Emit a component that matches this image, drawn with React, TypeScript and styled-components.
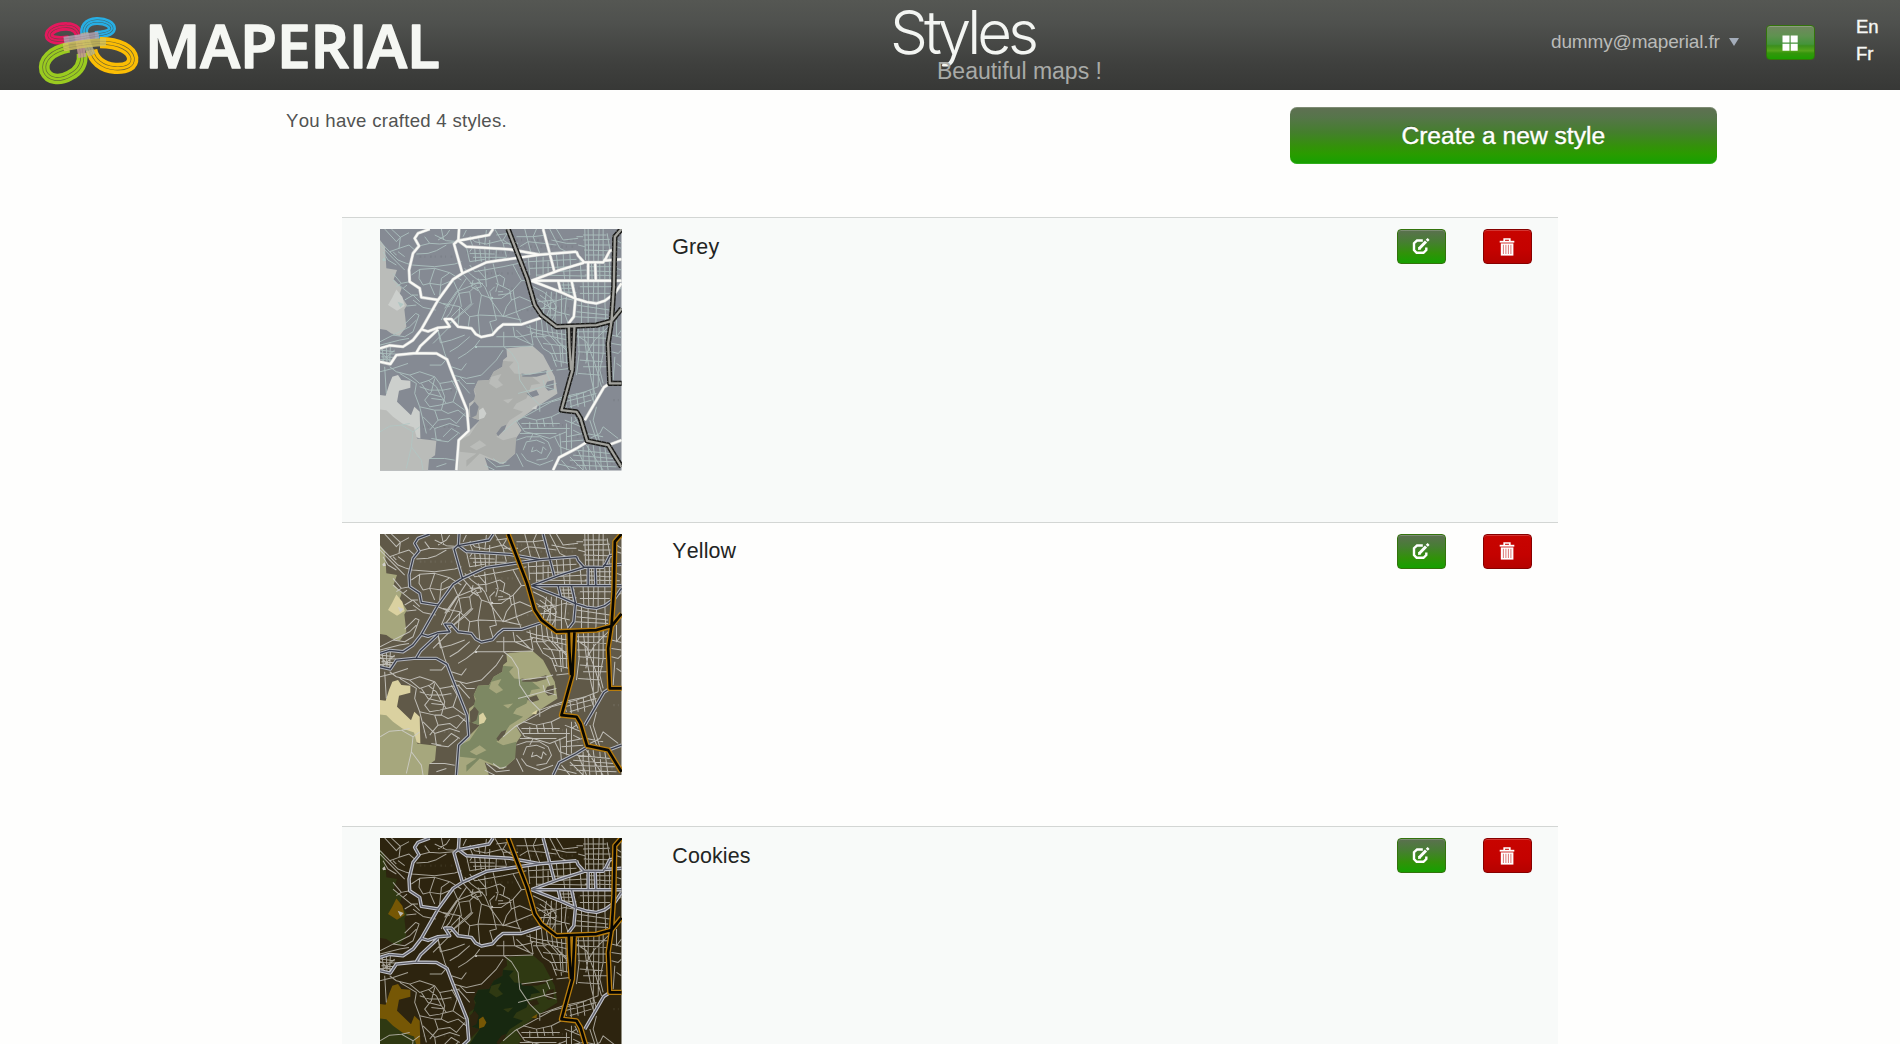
import React from "react";
import styled, { createGlobalStyle } from "styled-components";

const GlobalStyle = createGlobalStyle`
  html, body {
    margin: 0;
    padding: 0;
    background: #fefefd;
  }
  body {
    height: 1044px;
    overflow: hidden;
    font-family: "Liberation Sans", Arial, sans-serif;
    font-kerning: none;
    color: #222423;
  }
  * { box-sizing: border-box; }
`;

const Page = styled.div`
  width: 1900px;
  height: 1044px;
  overflow: hidden;
`;

const Header = styled.header`
  display: flex;
  align-items: flex-start;
  height: 90px;
  background: linear-gradient(#555753 0%, #4f514e 25%, #3f403e 70%, #373836 100%);
`;

const LogoLink = styled.div`
  width: 890px;
  height: 90px;
`;

const Heading = styled.div`
  width: 661px;
`;

const Title = styled.h1`
  margin: -5px 0 0;
  font-family: Inter, "Liberation Sans", sans-serif;
  font-weight: 300;
  font-size: 60px;
  line-height: 74px;
  letter-spacing: -4px;
  color: #f3f5f2;
`;

const Subtitle = styled.p`
  margin: -11px 0 0 47px;
  font-size: 23px;
  line-height: 26px;
  letter-spacing: 0;
  color: #a9aba8;
`;

const Account = styled.div`
  display: flex;
  align-items: center;
  gap: 9px;
  width: 215px;
  padding-top: 30px;
  font-size: 19px;
  line-height: 24px;
  letter-spacing: -0.15px;
  color: #babbb9;
`;

const Caret = styled.span`
  border: 5.5px solid transparent;
  border-top: 8px solid #a4adba;
  border-bottom: 0;
`;

const Button = styled.button<{ $tone: "green" | "red" | "menu" }>`
  display: flex;
  align-items: center;
  justify-content: center;
  width: 48.5px;
  height: 35px;
  padding: 0;
  border-radius: 4px;
  border: 1px solid ${(p) => (p.$tone === "red" ? "#870000" : "#33730c")};
  box-shadow: inset 0 1px 0 rgba(255, 255, 255, 0.2);
  background: ${(p) =>
    p.$tone === "red"
      ? "linear-gradient(#c80400, #c40200 60%, #b50200)"
      : p.$tone === "menu"
        ? "linear-gradient(#71865f 0%, #5f9250 30%, #44943a 55%, #3c8f1c 60%, #55a51c 75%, #35960c 82%, #1c9d00 100%)"
        : "linear-gradient(#5b7050 0%, #477e33 35%, #319209 70%, #16a000 100%)"};
`;

const MenuSlot = styled.div`
  width: 90px;
  padding-top: 25px;
`;

const Languages = styled.div`
  padding-top: 14px;
  font-size: 18.5px;
  line-height: 26.5px;
  color: #f6f7f5;
  -webkit-text-stroke: 0.4px #f6f7f5;
`;

const Toolbar = styled.section`
  display: flex;
  justify-content: space-between;
  align-items: flex-start;
  height: 127px;
  padding: 17px 183.5px 0 286px;
`;

const Summary = styled.p`
  margin: 2px 0 0;
  font-size: 18.6px;
  line-height: 24px;
  letter-spacing: 0.27px;
  color: #525352;
`;

const CreateButton = styled.button`
  width: 426.5px;
  height: 57px;
  padding: 0;
  border: 0;
  border-radius: 7px;
  font: 24.6px/57px "Liberation Sans", Arial, sans-serif;
  color: #fff;
  text-shadow: 0 -1px 0 rgba(0, 0, 0, 0.3);
  -webkit-text-stroke: 0.4px #fff;
  box-shadow: inset 0 1px 0 rgba(255, 255, 255, 0.2), inset 0 -1px 0 rgba(90, 190, 70, 0.4);
  background: linear-gradient(#5f7053 0%, #56754a 18%, #447f2c 45%, #339209 70%, #2a9b00 82%, #15a000 100%);
`;

const List = styled.main`
  width: 1216px;
  margin-left: 342px;
`;

const Row = styled.article<{ $shaded: boolean }>`
  display: flex;
  align-items: flex-start;
  height: 304.6px;
  padding: 11px 26.5px 0 38.3px;
  border-top: 1px solid #d3d6d4;
  background: ${(p) => (p.$shaded ? "#f8faf9" : "#fefefd")};
`;

const Name = styled.h2`
  flex: 1;
  margin: 5.6px 0 0 50.5px;
  font-weight: 400;
  font-size: 21.4px;
  line-height: 25px;
  letter-spacing: 0.15px;
  color: #222423;
`;

const Actions = styled.div`
  display: flex;
  gap: 37.4px;
`;

const MapSvg = styled.svg`
  display: block;
  width: 241.5px;
  height: 241.5px;
  flex: none;
`;

type Theme = {
  ground: string;
  texture: string;
  park: string;
  wood: string;
  field: string;
  parkLeft: string;
  street: string;
  roadCase: string;
  roadCore: string;
  wayCase: string;
  wayCore: string;
  roadW: number;
  coreW: number;
  wayW: number;
  streetW: number;
  dashed?: boolean;
};

const grey: Theme = {
  ground: "#858a93", texture: "#7d828a", park: "#babcb9", wood: "#acaeab", field: "#cccfcc", parkLeft: "#babcb9",
  street: "#b1c7c4", roadCase: "#c9cccc", roadCore: "#fafaf6", wayCase: "#171716", wayCore: "#a3a39e",
  roadW: 9.5, coreW: 6, wayW: 7, streetW: 2.9, dashed: true,
};
const yellow: Theme = {
  ground: "#605948", texture: "#6c6657", park: "#a6a77d", wood: "#7d8863", field: "#dad1a0", parkLeft: "#a6a77d",
  street: "#d0cfca", roadCase: "#b3b6bd", roadCore: "#373c4b", wayCase: "#b87d0d", wayCore: "#080702",
  roadW: 10, coreW: 4, wayW: 8, streetW: 3,
};
const cookies: Theme = {
  ground: "#2d240f", texture: "#3b331f", park: "#2f3912", wood: "#172810", field: "#765705", parkLeft: "#2f3912",
  street: "#bab7ae", roadCase: "#c3c4cb", roadCore: "#62646f", wayCase: "#b87d0d", wayCore: "#080702",
  roadW: 10.5, coreW: 4, wayW: 8, streetW: 3,
};

const roads = [
  "M180 27L145 40L135 55L148 78L130 100L118 150L120 185L150 205L155 232L207 240",
  "M268 27L266 60L253 72L278 160M266 62L358 45L370 27M266 62L290 80L420 88L510 104",
  "M620 95L510 104L350 127L278 160L250 178L205 240L155 328L130 360L100 380L60 376L31 385",
  "M620 95L625 107L642 126L700 127L708 115L720 92L735 90M700 122L755 118",
  "M31 425L62 432L80 405L140 399L200 400L232 418L250 465L292 570L297 632L267 660L260 750",
  "M140 398L152 378L205 328M155 328L175 334L205 323L240 320L225 297L245 297L265 320L305 325L318 342L335 351L368 344L385 325L400 313L455 313L515 293",
  "M520 27L537 90L553 152M485 182L570 150L642 128M485 182L755 182",
  "M485 182L570 215L615 235L650 246L680 250L705 242L735 220L755 190",
  "M565 182L573 215M605 182L617 235L612 290L595 312M655 130L655 180M676 130L678 180",
  "M720 490L702 502L680 540L645 600M652 665L620 685L568 712L550 750M715 675L755 660",
];

const ways = [
  "M415 27L472 175L495 255L515 285L560 320L680 315L725 303L755 266",
  "M755 27L735 50L732 200L725 303L715 370L720 490L755 490",
  "M597 320L599 380L604 450M614 320L608 450L590 515L575 570L620 575L632 595L652 662L715 675L735 708L755 740",
];

const streets = [
  // North-west
  "M31 65L60 95L85 120L110 130L128 135L195 140L255 132L275 125",
  "M31 75L70 115L105 150M45 27L80 65L92 52L118 38M65 27L92 52M92 52L88 85L60 95M88 85L118 75L135 90",
  "M148 78L180 70L210 72L250 68M180 70L165 50M195 45L230 62L255 64M205 60L230 45L240 30M215 27L222 60M175 100L140 102M175 100L200 92L230 75",
  "M125 165L150 148L195 145L240 158L275 180M150 148L148 175L160 195M195 145L180 190L195 225M240 158L215 175L210 225M160 195L180 190L215 195L250 180",
  "M70 160L95 190L120 185M70 180L100 205L125 225L145 225M95 190L80 200M100 205L112 195M105 240L130 225L150 245M130 240L160 262L198 270M110 258L140 255",
  "M85 95L105 110M70 95L80 105M40 95L55 120L80 135",
  "M31 365L70 345L105 350L130 335L148 285L138 280L105 312M70 345L120 320L140 300M31 375L90 360L118 355",
  // Middle-north grid
  "M290 80L300 125L345 118M315 85L318 125M330 85L335 125M345 85L348 125M360 60L358 120M380 85L378 125M300 100L375 102M310 112L410 112M300 55L310 80L300 95",
  "M280 50L290 30M300 48L315 65L350 72L400 60M325 45L330 75M350 30L345 75M375 27L400 70L410 110M400 60L430 80M380 45L420 40M400 70L445 70M420 27L400 60",
  "M278 160L310 195L330 185L345 200L360 235L400 290M290 175L280 190L230 265L215 300M285 145L305 165L325 180L350 178L390 165M310 195L260 215L225 265",
  "M300 135L315 155L400 140L470 125M325 150L350 178M345 140L350 200M370 130L385 190L378 215M390 165L405 175L400 200L420 210L425 240M378 190L400 200M365 235L395 235L430 210L455 182M430 135L455 182L472 180",
  "M250 180L268 220L240 280L225 298M268 220L300 215L320 195M268 220L275 260L245 290M300 215L305 250L240 310M320 200L335 225L325 285L330 345M335 225L365 235L380 300L360 305L372 345",
  "M220 250L270 260L300 290L330 285L400 288L455 300M205 245L240 260M240 310L290 270L310 250M270 260L265 320M300 290L295 324M425 240L450 230L485 245M425 240L410 260L400 290L440 275L490 255M430 210L440 275L455 312",
  "M365 235L360 215L375 200M385 215L400 215M385 225L425 220M310 180L305 200L325 212M325 175L335 200L315 205M300 190L340 190",
  // North-east grid
  "M450 80L475 65L520 70L560 75M440 50L490 50L530 45M465 27L475 65L485 105M500 27L490 50L510 100M540 27L570 85L590 95M560 27L580 60L625 55M545 60L590 70L620 70M560 105L565 150M580 98L582 140M600 97L602 135",
  "M645 27L647 120M655 27L657 125M670 27L672 125M688 27L685 125M700 27L700 120M640 45L710 45M640 60L720 58M645 75L722 75M642 90L715 92M645 105L705 105M620 50L640 50M625 75L645 80M712 40L720 90",
  "M475 125L620 118M480 145L600 140M475 110L480 165M500 110L500 170M520 110L520 165M535 125L535 158M550 155L650 150M500 165L650 168M580 140L585 180M600 140L600 180M630 110L635 180M650 140L725 140M650 152L725 155M645 165L750 167M665 130L667 180M690 130L690 180M705 130L705 180M718 105L720 180",
  "M580 185L585 225M595 185L598 225M610 190L610 230M575 195L615 195M570 205L615 205M575 215L620 218M640 185L642 240M655 185L657 245M672 185L670 248M685 185L685 248M705 185L705 240M630 200L725 200M630 220L720 220M680 250L678 315M655 250L655 310M705 242L708 305M620 255L720 270M620 275L715 285M615 290L715 295M635 245L635 315M740 60L755 70M740 80L755 85M740 145L755 150M740 210L755 205",
  // Ring around the junction
  "M490 200L520 215L545 235L560 260L555 285L540 310M510 225L530 240L540 265L530 290M505 245L555 240M505 265L560 265M520 285L575 285M530 215L520 285M545 215L540 300M560 215L555 315M575 225L575 315M590 230L585 280L595 310M500 235L560 275L600 285M510 270L550 245L585 235L610 240",
  // East
  "M500 300L500 350L520 385L545 400L560 440M515 300L520 350L545 375L562 420M530 305L535 340L570 380L575 440M545 318L550 350L595 390M560 325L565 365L598 400M480 315L490 375M470 320L500 330L595 345M480 335L595 360M490 350L530 350M520 370L600 380M540 400L600 400M550 420L600 430M560 450L600 445M575 330L580 430M588 325L590 430",
  "M625 320L628 400L620 465M640 320L650 400L665 480L680 540M655 318L655 390L648 430M672 318L670 540M688 315L685 500M700 310L700 400L690 450L700 490M620 335L715 335M620 350L715 355M622 375L712 375M650 400L675 360L715 320M625 395L710 400M630 420L700 425M640 440L715 440M625 460L690 465M620 345L650 365L675 430L695 500M740 300L740 350L755 330M725 345L755 352M725 370L755 375M725 395L745 400L755 390M735 410L730 480M740 430L755 440",
  // Between the two long roads
  "M205 330L225 400L232 418M205 330L212 368L245 360L285 345M240 320L215 345L190 370M265 415L290 400L315 380M240 395L265 380L300 350M245 440L275 450L290 430M180 435L215 435L228 420M250 465L290 475L335 465L380 420L400 390M315 380L370 380L402 380L490 378M402 335L402 380M330 360L315 380M430 320L435 350L490 375M380 350L450 350L490 340M440 330L480 370",
  "M31 455L70 445L115 430M60 440L80 455L120 465L150 455L195 470L210 490L270 480M45 440L50 520M90 460L140 490L135 520L150 560L170 640M120 465L150 490L180 480L195 470",
  "M270 470L290 490L315 490M265 480L300 520M245 480L262 510L250 545L285 570M150 500L180 510L220 510L245 505M155 490L175 520L215 530L230 550L250 545M175 480L200 500L215 530M195 475L185 515L165 540L180 560L210 555L230 550M210 490L225 530L215 570L235 580L265 570L290 590M150 560L195 570L215 570M195 570L205 600L240 595L260 610L285 580M160 590L195 625L240 610L270 620M180 630L205 600M195 625L200 660L235 665L265 640M220 650L245 625L270 640M185 655L215 660M180 715L225 715L255 720M200 740L230 730M185 535L225 540",
  // Inside the parks
  "M402 380L425 398L445 430L450 480L480 525L510 555L510 575M445 520L520 500L560 490M455 465L530 455L550 450M520 480L525 500L560 510M530 455L540 480M400 635L435 605L500 570L545 545L620 525L685 500",
  "M31 635L60 618L95 615L130 635L125 680L110 745M130 635L150 620M125 680L155 720L160 750M95 615L120 610",
  // South-east
  "M510 555L580 530L650 515M460 590L500 600L545 590L575 575M480 605L480 625M500 600L505 625M520 595L525 620M545 590L550 620M455 610L570 610M460 625L600 625M440 600L465 635L490 640L540 655L590 635M450 640L560 640M490 640L480 660M580 530L590 560M600 525L605 565M620 520L625 560M640 515L645 560M585 545L680 520M600 560L665 540M660 510L675 555",
  "M440 660L470 650L510 650L535 665L545 690L530 715L500 720M460 690L470 665L500 660L525 670M455 700L470 720L510 735L550 720M440 700L460 740M490 680L485 695L500 690L515 700L520 680L530 690M555 650L570 680L600 690M570 640L575 710M590 610L590 690M605 590L605 685M585 600L635 620M590 650L640 640M575 665L640 660M605 610L620 600M610 630L630 640M615 590L625 610",
  "M660 600L680 660L700 675M680 560L670 600L690 665M650 640L700 650M660 655L690 640L700 620L745 655M640 680L640 750M655 675L660 750M670 675L680 750M690 680L695 750M705 680L715 750M620 690L720 700M610 705L730 715M600 720L735 725M620 735L740 740M625 690L650 750M600 710L640 750M575 720L600 750M560 730L620 745M650 675L700 750M350 715L380 740L420 735M370 715L390 730L410 725M345 735L375 750",
];

const StyleMap = ({ theme: t }: { theme: Theme }) => (
  <MapSvg viewBox="31 27 724 724" fill="none" strokeLinejoin="round">
    <rect x="31" y="27" width="724" height="724" fill={t.ground} />
    <path
      stroke={t.texture}
      strokeWidth="7"
      strokeDasharray="5 9 3 14"
      d="M290 98H430M300 115H420M440 60H620M450 80H610M640 60H715M640 90H715M350 160H470M380 205H440M490 140H640M490 225H600M625 205H720M500 265H600M625 265H720M500 340H590M625 345H705M625 400H700M180 510H250M160 620H270M470 615H580M590 650H640M620 700H730M600 730H730M440 270H490M150 110H250M730 540H755M650 460H700"
    />
    <path fill={t.parkLeft} d="M31 60L46 80L50 145L82 150L72 178L96 205L90 222L112 255L104 268L110 320L90 347L65 340L50 330L31 327Z" />
    <path fill={t.field} d="M55 255L68 232L80 208L98 230L105 258L82 272Z" />
    <path fill={t.field} d="M31 525L48 527L58 495L68 470L85 465L95 480L122 482L122 503L88 512L82 545L124 585L134 560L150 575L152 655L31 620Z" />
    <path fill={t.park} d="M31 568L50 570L70 590L98 610L133 622L142 655L200 662L196 705L178 718L175 751H31Z" />
    <path fill={t.park} d="M410 385L488 377L520 405L555 470L563 520L502 560L440 605L455 630L435 660L436 700L400 732L345 712L358 751H265L268 665L300 630L330 600L298 590L298 550L318 535L312 510L325 482L358 480L372 455L398 440L400 420L412 410Z" />
    <path fill={t.wood} d="M400 422L432 425L418 440L434 460L480 465L512 490L485 495L470 535L440 550L430 565L460 575L420 600L400 630L380 650L400 660L440 650L436 700L400 730L330 700L290 740L290 720L320 700L270 695L270 660L300 645L330 600L298 590L318 520L312 510L325 482L358 480L372 455L398 440Z" />
    <path fill={t.park} d="M365 470L395 462L385 480L400 495L380 505L358 490ZM300 680L330 660L350 675L320 690ZM400 540L430 535L415 550Z" />
    <path fill={t.field} d="M328 570L340 562L350 580L343 593L328 598ZM485 565L502 555L500 568Z" />
    <path fill={t.ground} d="M455 460L480 464L505 458L530 450L530 462L500 470L458 470ZM470 520L500 510L508 525L485 532ZM532 485L552 480L552 508L535 512L525 500ZM380 640L395 620L410 614L405 628L385 648ZM300 560L315 545L327 560L320 585L302 595Z" />
    <g stroke={t.street} strokeWidth={t.streetW} opacity="0.85">
      {streets.map((d) => <path key={d} d={d} />)}
      <path d="M31 390L75 395M31 400L80 402M35 410L75 412M31 418L68 420M38 385L42 430M50 380L52 430M62 380L60 430M31 395L65 425M35 425L75 390" />
    </g>
    <path fill={t.street} d="M38 118L45 112L49 122L40 124ZM316 378H322V384H316ZM362 232L370 230V236H362ZM84 245L102 252L92 262Z" />
    <path stroke={t.roadCase} strokeWidth={t.roadW} d={roads.join("")} />
    <path stroke={t.roadCore} strokeWidth={t.coreW} d={roads.join("")} />
    <path stroke={t.wayCase} strokeWidth="16" d={ways.join("")} />
    {t.dashed && <path stroke="#777974" strokeWidth="16" strokeDasharray="2 13" d={ways.join("")} />}
    {t.dashed && <path stroke="#22221f" strokeWidth="11" d={ways.join("")} />}
    <path stroke={t.wayCore} strokeWidth={t.wayW} d={ways.join("")} />
  </MapSvg>
);

const loops = [
  { color: "#e5185d", w: 26, d: "M236 120C242 92 222 79 200 79C170 78 147 92 147 106C148 121 176 123 207 119" },
  { color: "#27aee4", w: 24, d: "M256 112C244 82 262 64 290 63C318 62 336 74 336 86C334 99 310 103 285 105" },
  { color: "#9acb20", w: 32, d: "M246 160C250 190 238 212 210 226C178 244 146 240 134 213C126 180 155 152 207 142" },
  { color: "#fbbd04", w: 34, d: "M275 150C280 178 305 202 345 205C380 207 400 196 398 174C394 150 360 128 300 128" },
];
const crossings = [
  { color: "#c89a9a", w: 24, d: "M237 105C238 125 243 145 247 172" },
  { color: "#b9b68c", w: 24, d: "M253 98C257 120 264 142 276 165" },
  { color: "#b3a5b6", w: 22, d: "M192 121L296 105" },
  { color: "#d3c45e", w: 24, d: "M190 142C230 135 270 126 318 127" },
];

const Strand = ({ color, w, d, line, dim }: { color: string; w: number; d: string; line: string; dim: number }) => (
  <g>
    <path d={d} stroke={color} strokeWidth={w} />
    <path d={d} stroke={line} strokeWidth={w * 0.36} opacity={dim} />
    <path d={d} stroke={color} strokeWidth={w * 0.23} />
  </g>
);

const Logo = () => (
  <svg width="460" height="90" viewBox="0 0 1380 270" fill="none">
    {loops.map((l) => <Strand key={l.color} {...l} line="#4b4c3d" dim={0.75} />)}
    {crossings.map((l) => (
      <g key={l.color} opacity="0.82"><Strand {...l} line="#77705d" dim={0.35} /></g>
    ))}
    <text
      x="435" y="203" textLength="884" lengthAdjust="spacingAndGlyphs"
      fontFamily="'Open Sans', 'Noto Sans', sans-serif" fontWeight="600" fontSize="180" fill="#f5f7f3"
      stroke="#f5f7f3" strokeWidth="5" strokeLinejoin="round"
    >
      MAPERIAL
    </text>
  </svg>
);

const GridIcon = () => (
  <svg width="16" height="16" viewBox="0 0 16 16" fill="#fff">
    <path d="M.5.5h7v7h-7zM8.7.5h7v7h-7zM.5 8.7h7v7h-7zM8.7 8.7h7v7h-7z" />
  </svg>
);

const EditIcon = () => (
  <svg width="18" height="17" viewBox="0 0 18 17" fill="none" stroke="#fff">
    <path d="M10.8 2.5H5L2 5.2V12L4.6 14.8H11.5L14.3 12V9.5" strokeWidth="2.4" />
    <path d="M7 10.8L14 3.5" strokeWidth="3" />
    <path d="M14.8 2.8L16.6 1" strokeWidth="2.8" />
    <path d="M6 12L6.4 9L9 11.6Z" fill="#fff" stroke="none" />
  </svg>
);

const TrashIcon = () => (
  <svg width="16" height="18" viewBox="0 0 16 18" fill="none">
    <path d="M5.2 3V1H10.8V3" stroke="#fff" strokeWidth="1.7" />
    <path d="M.7 3.7H15.3" stroke="#fff" strokeWidth="1.8" />
    <path d="M1.8 5.4H14.4V17.6H1.8Z" fill="#fff" />
    <path d="M4.4 6.8V16M6.9 6.8V16M9.4 6.8V16M11.9 6.8V16" stroke="#d76a66" strokeWidth=".9" />
  </svg>
);

const styleList = [
  { name: "Grey", theme: grey },
  { name: "Yellow", theme: yellow },
  { name: "Cookies", theme: cookies },
];

export default function App() {
  return (
    <Page>
      <GlobalStyle />
      <Header>
        <LogoLink><Logo /></LogoLink>
        <Heading>
          <Title>Styles</Title>
          <Subtitle>Beautiful maps !</Subtitle>
        </Heading>
        <Account>dummy@maperial.fr<Caret /></Account>
        <MenuSlot><Button $tone="menu" aria-label="Menu"><GridIcon /></Button></MenuSlot>
        <Languages>
          <div>En</div>
          <div>Fr</div>
        </Languages>
      </Header>
      <Toolbar>
        <Summary>You have crafted 4 styles.</Summary>
        <CreateButton>Create a new style</CreateButton>
      </Toolbar>
      <List>
        {styleList.map((s, i) => (
          <Row key={s.name} $shaded={i % 2 === 0}>
            <StyleMap theme={s.theme} />
            <Name>{s.name}</Name>
            <Actions>
              <Button $tone="green" aria-label="Edit"><EditIcon /></Button>
              <Button $tone="red" aria-label="Delete"><TrashIcon /></Button>
            </Actions>
          </Row>
        ))}
      </List>
    </Page>
  );
}
